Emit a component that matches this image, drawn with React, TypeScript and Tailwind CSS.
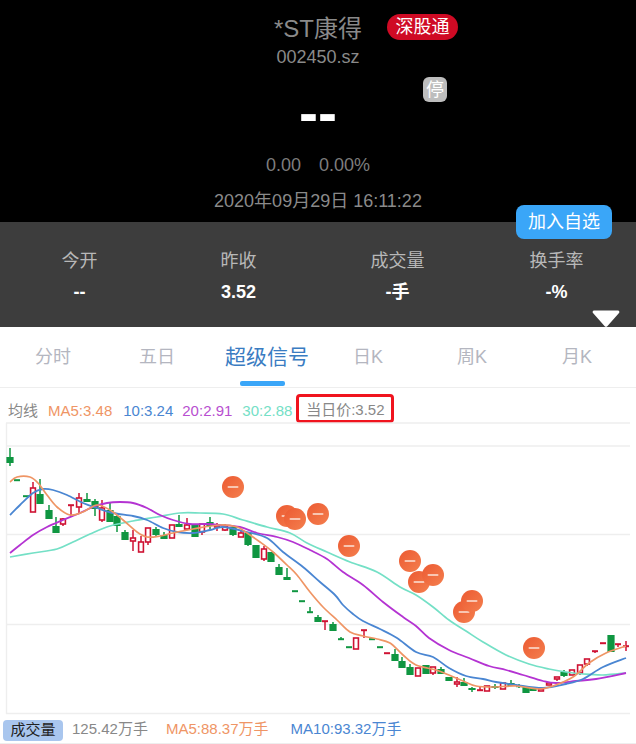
const FONT = "font-['Liberation_Sans','Noto_Sans_CJK_SC',sans-serif]";

// x, wick top, wick bottom, body top, body bottom, r = red (hollow) / g = green
type Candle = [number, number, number, number, number, "r" | "g"];

const candles: Candle[] = [
  [10, 448, 466, 457, 463, "g"],
  [17, 480, 480, 480, 481, "g"],
  [26, 496, 496, 496, 497, "g"],
  [33, 482, 512, 488, 512, "r"],
  [40, 479, 504, 494, 504, "g"],
  [49, 505, 519, 510, 519, "g"],
  [56, 517, 533, 526, 533, "g"],
  [63, 518, 526, 519, 524, "r"],
  [71, 505, 516, 505, 505.5, "r"],
  [79, 493, 513, 498, 507, "r"],
  [87, 493, 502, 499, 502, "g"],
  [95, 499, 516, 501, 509, "g"],
  [102, 500, 522, 508, 520, "r"],
  [110, 502, 522, 510, 522, "g"],
  [117, 513, 532, 516, 526, "g"],
  [125, 530, 540, 532, 540, "g"],
  [133, 530, 551, 538, 541, "r"],
  [141, 536, 552, 542, 552, "r"],
  [148, 528, 545, 528, 542, "r"],
  [156, 527, 537, 529, 535, "g"],
  [164, 532, 539, 535, 539, "g"],
  [172, 525, 538, 525, 538, "r"],
  [179, 515, 527, 524, 527, "g"],
  [187, 518, 529, 525, 529, "r"],
  [195, 525, 537, 525, 537, "g"],
  [202, 524, 535, 524, 532, "r"],
  [210, 517, 529, 522, 526, "g"],
  [217, 523, 531, 525, 527, "r"],
  [225, 524, 531, 526, 530, "r"],
  [233, 526, 536, 527, 535, "g"],
  [241, 530, 537, 533, 537, "r"],
  [248, 533, 546, 533, 545, "g"],
  [256, 545, 558, 545, 558, "g"],
  [264, 546, 561, 549, 559, "r"],
  [271, 552, 562, 552, 562, "g"],
  [279, 564, 575, 567, 575, "g"],
  [287, 568, 580, 577, 580, "g"],
  [295, 591, 591, 591, 592, "g"],
  [302, 601, 601, 601, 602, "g"],
  [310, 607, 612, 612, 613, "g"],
  [318, 615, 622, 617, 622, "g"],
  [325, 621, 630, 621, 621.5, "r"],
  [333, 622, 631, 624, 631, "g"],
  [341, 637, 639, 639, 640, "g"],
  [349, 647, 647, 647, 648, "g"],
  [356, 638, 649, 638, 649, "r"],
  [364, 630, 638, 630, 630.5, "r"],
  [372, 639, 639, 639, 640, "g"],
  [380, 647, 647, 647, 648, "g"],
  [387, 653, 653, 653, 653.5, "r"],
  [395, 649, 661, 654, 661, "g"],
  [402, 657, 668, 661, 668, "g"],
  [410, 664, 675, 667, 675, "g"],
  [418, 668, 676, 668, 676, "r"],
  [426, 665, 674, 665, 674, "g"],
  [433, 667, 675, 667, 673, "r"],
  [441, 667, 674, 669, 674, "g"],
  [449, 677, 681, 677, 681, "g"],
  [457, 677, 687, 682, 684, "r"],
  [464, 678, 686, 682, 686, "g"],
  [472, 687, 692, 688, 690, "g"],
  [480, 686, 690, 690, 690.5, "r"],
  [487, 686, 691, 686, 691, "r"],
  [495, 684, 689, 686, 688, "g"],
  [503, 683, 689, 683, 689, "r"],
  [511, 680, 686, 683, 686, "g"],
  [519, 684, 688, 686, 687, "g"],
  [526, 687, 693, 687, 693, "g"],
  [533, 688, 691, 688, 691, "g"],
  [541, 689, 691, 689, 691, "r"],
  [549, 683, 685, 683, 685, "r"],
  [557, 677, 681, 677, 679, "r"],
  [564, 670, 677, 672, 676, "g"],
  [572, 670, 675, 670, 675, "r"],
  [580, 665, 675, 665, 673, "r"],
  [587, 659, 666, 659, 664, "r"],
  [595, 651, 653, 651, 651.5, "r"],
  [603, 643, 643, 643, 643.5, "r"],
  [611, 635, 652, 635, 652, "g"],
  [618, 644, 647, 644, 644.5, "r"],
  [626, 641, 651, 646, 646.5, "r"],
];

const ma5 = "10,482 17,477 30,477 38,483 47,495 57,507 70,515 83,512 97,505 110,510 123,520 137,532 147,537 160,536 173,533 193,529 220,525 237,527 247,533 260,542 273,552 287,565 297,575 310,592 323,607 337,620 350,632 363,636 377,639 390,643 403,655 416,665 436,670 449,675 463,681 476,686 493,687 516,686 539,689 553,686 573,677 589,663 606,653 626,646";
const ma10 = "10,515 20,505 33,493 43,489 53,490 67,495 83,503 97,508 113,513 133,516 147,520 163,528 177,532 193,533 210,530 223,527 247,532 267,538 283,552 303,567 320,582 335,595 343,605 353,614 363,621 380,629 397,638 416,652 433,657 449,668 466,676 483,679 496,682 516,685 543,688 566,684 583,679 603,667 626,658";
const ma20 = "10,553 20,545 33,535 47,527 63,520 80,513 93,507 107,503 120,502 133,503 147,508 160,515 173,520 190,524 207,524 220,525 240,527 257,533 277,537 293,542 310,550 327,559 343,572 363,585 383,602 403,617 416,626 429,638 449,650 469,658 489,666 506,670 523,675 543,681 556,683 576,681 596,679 626,673";
const ma30 = "10,557 33,553 57,549 73,542 90,534 110,526 133,521 157,517 180,513 200,513 223,514 243,520 267,527 290,533 307,543 327,552 350,562 377,572 400,587 416,595 433,607 449,620 466,631 483,642 506,655 529,664 549,669 566,672 583,674 603,675 626,673";

// catmull-rom through the traced points so the averages read as curves
function smooth(points: string) {
  const p = points.split(" ").map((s) => s.split(",").map(Number));
  let d = `M${p[0][0]} ${p[0][1]}`;
  for (let i = 0; i < p.length - 1; i++) {
    const a = p[Math.max(i - 1, 0)];
    const b = p[i];
    const c = p[i + 1];
    const e = p[Math.min(i + 2, p.length - 1)];
    d += `C${b[0] + (c[0] - a[0]) / 6} ${b[1] + (c[1] - a[1]) / 6} ${c[0] - (e[0] - b[0]) / 6} ${c[1] - (e[1] - b[1]) / 6} ${c[0]} ${c[1]}`;
  }
  return d;
}

const signals = [
  [233, 487],
  [287, 516],
  [295, 519],
  [318, 514],
  [349, 546],
  [410, 561],
  [419, 582],
  [433, 575],
  [464, 612],
  [472, 601],
  [534, 648],
];

const stats = [
  { label: "今开", value: "--" },
  { label: "昨收", value: "3.52" },
  { label: "成交量", value: "-手" },
  { label: "换手率", value: "-%" },
];

const tabs = ["分时", "五日", "超级信号", "日K", "周K", "月K"];

function KChart() {
  return (
    <svg viewBox="0 422 636 294" className="block h-[294px] w-[636px]">
      <defs>
        <linearGradient id="sig" x1="0" y1="0" x2="1" y2="1">
          <stop offset="0" stopColor="#ec5a32" />
          <stop offset="1" stopColor="#f47f4e" />
        </linearGradient>
      </defs>
      {[423, 446, 534.5, 624.5, 713.5].map((y) => (
        <line key={y} x1="6" x2="630" y1={y} y2={y} stroke="#eeeeee" strokeWidth="1.4" />
      ))}
      <line x1="6.5" x2="6.5" y1="423" y2="714" stroke="#eeeeee" strokeWidth="1.4" />
      {candles.map(([x, wt, wb, bt, bb, c], i) => {
        const color = c === "r" ? "#cf1233" : "#0f9641";
        const flat = bb - bt < 1.5;
        return (
          <g key={i}>
            {wb > wt && <line x1={x} x2={x} y1={wt} y2={wb} stroke={color} strokeWidth="1.5" />}
            {flat ? (
              <rect x={x - 3} y={bt - 0.8} width="6" height="2" fill={color} />
            ) : c === "r" ? (
              <rect x={x - 2.4} y={bt} width="4.8" height={bb - bt} fill="#fff" stroke={color} strokeWidth="1.6" />
            ) : (
              <rect x={x - 3.6} y={bt} width="7.2" height={bb - bt} fill={color} />
            )}
          </g>
        );
      })}
      <path d={smooth(ma30)} fill="none" stroke="#74e0c6" strokeWidth="1.7" />
      <path d={smooth(ma20)} fill="none" stroke="#b433d2" strokeWidth="1.8" />
      <path d={smooth(ma10)} fill="none" stroke="#4a86d2" strokeWidth="1.8" />
      <path d={smooth(ma5)} fill="none" stroke="#ef9565" strokeWidth="1.7" />
      {signals.map(([x, y]) => (
        <g key={`${x}-${y}`}>
          <circle cx={x} cy={y} r="11" fill="url(#sig)" />
          <rect x={x - 5.5} y={y - 0.8} width="11" height="1.6" rx="0.8" fill="#fbe3d8" />
        </g>
      ))}
    </svg>
  );
}

export default function App() {
  return (
    <div className={`relative h-[744px] w-[636px] overflow-hidden bg-white ${FONT}`}>
      {/* top quote */}
      <div className="relative flex h-[222px] flex-col items-center bg-black pt-[15px] text-[18px] text-[#8a8a8a]">
        <div className="relative h-[28px] text-[24px] leading-[28px]">
          *ST康得
          <span className="absolute left-[113px] top-[-1px] flex h-[26px] w-[71px] items-center justify-center rounded-[13px] bg-[#cf0a24] text-[18px] leading-none whitespace-nowrap text-white">
            深股通
          </span>
        </div>
        <div className="mt-[3px] h-[22px] leading-[22px]">002450.sz</div>
        <div className="relative mt-[14px] h-[62px] text-[57px] leading-[62px] font-bold text-white">
          --
          <span className="absolute left-[124px] top-[-5px] flex h-[25px] w-[24px] items-center justify-center rounded-[6px] bg-[#bdbdbd] text-[18px] leading-none font-normal text-white">
            停
          </span>
        </div>
        <div className="mt-[10px] flex h-[22px] gap-[18px] leading-[22px] text-[#7d7d7d]">
          <span>0.00</span>
          <span>0.00%</span>
        </div>
        <div className="mt-[14px] h-[22px] leading-[22px]">2020年09月29日 16:11:22</div>
        <button className="absolute left-[516px] top-[205px] z-10 flex h-[34px] w-[96px] items-center justify-center rounded-[8px] bg-[#3aa6f8] text-[18px] text-white">
          加入自选
        </button>
      </div>

      {/* stats */}
      <div className="relative grid h-[105px] grid-cols-4 bg-[#3d3d3d] pt-[27px] text-center text-[18px]">
        {stats.map((s) => (
          <div key={s.label}>
            <div className="h-[24px] leading-[24px] text-[#b8b8b8]">{s.label}</div>
            <div className="mt-[7px] h-[24px] leading-[24px] font-bold text-white">{s.value}</div>
          </div>
        ))}
        <svg viewBox="0 0 28 17" className="absolute right-[16px] bottom-0 h-[17px] w-[28px]">
          <path d="M2 0.5h24a1.5 1.5 0 0 1 1 2.5L15.5 16a2 2 0 0 1-3 0L1 3a1.5 1.5 0 0 1 1-2.5z" fill="#fff" />
        </svg>
      </div>

      {/* tabs */}
      <div className="grid h-[61px] grid-cols-[106px_102px_118px_84px_124px_86px] border-b border-[#eeeeee] text-center text-[18px] text-[#b4b6c0]">
        {tabs.map((t) => (
          <div key={t} className="relative flex items-center justify-center">
            {t === "超级信号" ? (
              <>
                <span className="text-[21px] text-[#3a7cc2]">{t}</span>
                <span className="absolute bottom-[1px] left-[32px] h-[5px] w-[45px] rounded-[2px] bg-[#3aa6f8]" />
              </>
            ) : (
              t
            )}
          </div>
        ))}
      </div>

      {/* ma legend */}
      <div className="flex h-[34px] items-start pl-[8px] pt-[6px] text-[15px] leading-[29px] whitespace-nowrap">
        <span className="mt-[2px] mr-[10px] text-[#888888]">均线</span>
        <span className="mt-[2px] mr-[11px] text-[#ef9565]">MA5:3.48</span>
        <span className="mt-[2px] mr-[9px] text-[#4a86d2]">10:3.24</span>
        <span className="mt-[2px] mr-[10px] text-[#b84fd0]">20:2.91</span>
        <span className="mt-[2px] mr-[4px] text-[#74e0c6]">30:2.88</span>
        <span className="flex h-[29px] w-[98px] items-center justify-center rounded-[4px] border-[3px] border-[#f0141e] pt-[2px] text-[#888888]">
          当日价:3.52
        </span>
      </div>

      <KChart />

      {/* volume row */}
      <div className="relative flex h-[28px] items-center border-b border-[#eeeeee] pl-[72px] text-[15px] whitespace-nowrap text-[#888888]">
        <span className="w-[94px]">125.42万手</span>
        <span className="mr-[22px] text-[#ef9565]">MA5:88.37万手</span>
        <span className="text-[#4a86d2]">MA10:93.32万手</span>
        <span className="absolute left-[3px] top-[4px] flex h-[21px] w-[60px] items-center justify-center rounded-[4px] bg-[#a9c6ee] text-[#222222]">
          成交量
        </span>
      </div>
    </div>
  );
}
